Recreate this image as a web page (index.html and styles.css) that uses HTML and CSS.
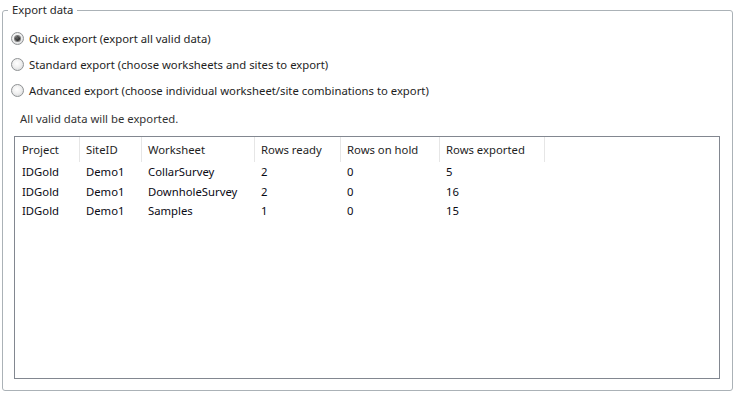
FILE: index.html
```html
<!DOCTYPE html>
<html>
<head>
<meta charset="utf-8">
<link rel="stylesheet" href="styles.css">
</head>
<body>
<fieldset class="group">
  <legend class="group-title">Export data</legend>
  <div class="options">
    <label class="option"><span class="radio checked"></span><span>Quick export (export all valid data)</span></label>
    <label class="option"><span class="radio"></span><span>Standard export (choose worksheets and sites to export)</span></label>
    <label class="option"><span class="radio"></span><span>Advanced export (choose individual worksheet/site combinations to export)</span></label>
  </div>
  <div class="note">All valid data will be exported.</div>
  <div class="list">
    <div class="row header">
      <div class="cell c1">Project</div>
      <div class="cell c2">SiteID</div>
      <div class="cell c3">Worksheet</div>
      <div class="cell c4">Rows ready</div>
      <div class="cell c5">Rows on hold</div>
      <div class="cell c6">Rows exported</div>
    </div>
    <div class="row">
      <div class="cell c1">IDGold</div>
      <div class="cell c2">Demo1</div>
      <div class="cell c3">CollarSurvey</div>
      <div class="cell c4">2</div>
      <div class="cell c5">0</div>
      <div class="cell c6">5</div>
    </div>
    <div class="row">
      <div class="cell c1">IDGold</div>
      <div class="cell c2">Demo1</div>
      <div class="cell c3">DownholeSurvey</div>
      <div class="cell c4">2</div>
      <div class="cell c5">0</div>
      <div class="cell c6">16</div>
    </div>
    <div class="row">
      <div class="cell c1">IDGold</div>
      <div class="cell c2">Demo1</div>
      <div class="cell c3">Samples</div>
      <div class="cell c4">1</div>
      <div class="cell c5">0</div>
      <div class="cell c6">15</div>
    </div>
  </div>
</fieldset>
</body>
</html>
```
FILE: styles.css
```css
html, body {
  margin: 0;
  padding: 0;
  background: #ffffff;
}
body {
  font-family: "Noto Sans", "Open Sans", sans-serif;
  font-size: 11.3px;
  color: #1e1e1e;
}
.group {
  box-sizing: border-box;
  margin: 2px 0 0 2px;
  width: 731px;
  height: 389px;
  border: 1px solid #abb2b7;
  border-radius: 3px;
  padding: 0 12px 0 8px;
}
.group-title {
  padding: 0 4px;
  margin-left: -3px;
  line-height: 16px;
  color: #262626;
}
.options {
  display: flex;
  flex-direction: column;
  margin-top: 7px;
}
.option {
  display: flex;
  align-items: center;
  height: 26px;
  gap: 5px;
  color: #1e1e1e;
}
.radio {
  box-sizing: border-box;
  width: 13px;
  height: 13px;
  border-radius: 50%;
  border: 1px solid #8f9294;
  background: radial-gradient(circle at 45% 40%, #ffffff 0%, #f0f0f0 45%, #cfd1d3 100%);
  display: flex;
  align-items: center;
  justify-content: center;
  flex: none;
}
.radio.checked::after {
  content: "";
  width: 5px;
  height: 5px;
  border-radius: 50%;
  background: radial-gradient(circle at 40% 35%, #6b6b6b 0%, #262626 70%, #111 100%);
  box-shadow: 0 0 0 1px #7a7a7a;
}
.note {
  margin-top: 8px;
  padding-left: 9px;
  line-height: 16px;
  color: #333;
}
.list {
  box-sizing: border-box;
  margin: 9px 0 0 3px;
  width: 706px;
  height: 243px;
  border: 1px solid #828790;
  color: #0a0a14;
}
.row {
  display: flex;
  height: 19.5px;
  align-items: center;
}
.row.header {
  height: 25px;
  align-items: stretch;
  color: #1e1e1e;
}
.cell {
  box-sizing: border-box;
  padding-left: 5px;
  white-space: nowrap;
}
.header .cell {
  display: flex;
  align-items: center;
  border-right: 1px solid #e6e6e6;
}
.c1 { width: 65px; padding-left: 7px; }
.c2 { width: 62px; padding-left: 6px; }
.c3 { width: 113px; padding-left: 6px; }
.c4 { width: 86px; padding-left: 6px; }
.c5 { width: 99px; padding-left: 6px; }
.c6 { width: 105px; padding-left: 6px; }
```
